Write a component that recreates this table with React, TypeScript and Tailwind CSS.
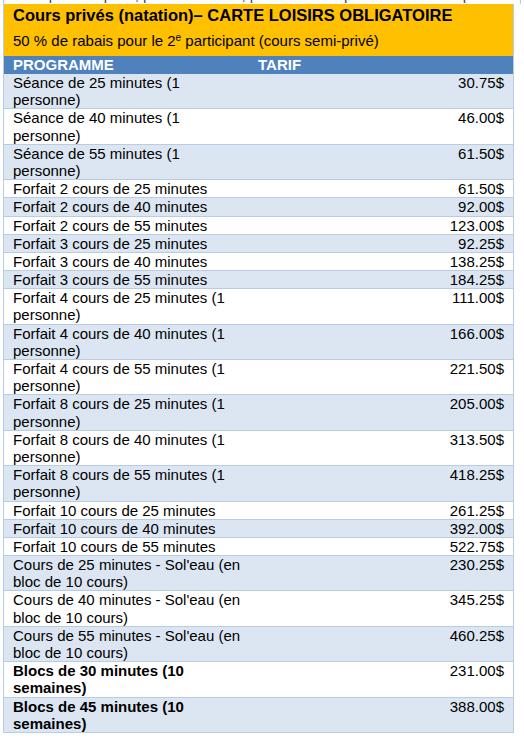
import React from "react";

type Row = { label: string; price: string; bold?: boolean };

const rows: Row[] = [
  { label: "Séance de 25 minutes (1 personne)", price: "30.75$" },
  { label: "Séance de 40 minutes (1 personne)", price: "46.00$" },
  { label: "Séance de 55 minutes (1 personne)", price: "61.50$" },
  { label: "Forfait 2 cours de 25 minutes", price: "61.50$" },
  { label: "Forfait 2 cours de 40 minutes", price: "92.00$" },
  { label: "Forfait 2 cours de 55 minutes", price: "123.00$" },
  { label: "Forfait 3 cours de 25 minutes", price: "92.25$" },
  { label: "Forfait 3 cours de 40 minutes", price: "138.25$" },
  { label: "Forfait 3 cours de 55 minutes", price: "184.25$" },
  { label: "Forfait 4 cours de 25 minutes (1 personne)", price: "111.00$" },
  { label: "Forfait 4 cours de 40 minutes (1 personne)", price: "166.00$" },
  { label: "Forfait 4 cours de 55 minutes (1 personne)", price: "221.50$" },
  { label: "Forfait 8 cours de 25 minutes (1 personne)", price: "205.00$" },
  { label: "Forfait 8 cours de 40 minutes (1 personne)", price: "313.50$" },
  { label: "Forfait 8 cours de 55 minutes (1 personne)", price: "418.25$" },
  { label: "Forfait 10 cours de 25 minutes", price: "261.25$" },
  { label: "Forfait 10 cours de 40 minutes", price: "392.00$" },
  { label: "Forfait 10 cours de 55 minutes", price: "522.75$" },
  { label: "Cours de 25 minutes - Sol'eau (en bloc de 10 cours)", price: "230.25$" },
  { label: "Cours de 40 minutes - Sol'eau (en bloc de 10 cours)", price: "345.25$" },
  { label: "Cours de 55 minutes - Sol'eau (en bloc de 10 cours)", price: "460.25$" },
  { label: "Blocs de 30 minutes (10 semaines)", price: "231.00$", bold: true },
  { label: "Blocs de 45 minutes (10 semaines)", price: "388.00$", bold: true },
];

export default function App() {
  return (
    <div className="min-h-[742px] w-[524px] bg-white font-['Liberation_Sans',Arial,sans-serif] text-black">
      {/* bas de la ligne précédente, coupé par le cadrage */}
      <div className="mx-[3px] h-[4px] overflow-hidden border-x border-[#b8cce4]">
        <div className="-mt-[14px] pl-[9px] text-[15px] leading-[17px] text-[#444]">
          Inscription requise, places limitées, paiement complet lors de l'inscription
        </div>
      </div>

      <div className="mx-[3px] w-[511px] border border-t-0 border-[#b8cce4]">
        <div className="bg-[#ffc000] px-[9px] pt-[2px] pb-[6px]">
          <div className="text-[16.5px] font-bold leading-[18px]">
            Cours privés (natation)– CARTE LOISIRS OBLIGATOIRE
          </div>
          <div className="mt-[8px] text-[15px] leading-[18px]">
            50 % de rabais pour le 2<sup className="text-[10px]">e</sup> participant (cours semi-privé)
          </div>
        </div>

        <div className="flex h-[18px] items-center bg-[#4f81bd] text-[15px] font-bold leading-[18px] text-white">
          <div className="w-[246px] pl-[9px]">PROGRAMME</div>
          <div className="pl-[8px]">TARIF</div>
        </div>

        {rows.map((r, i) => (
          <div
            key={r.label}
            className={`flex border-b border-[#b8cce4] text-[15px] leading-[17.18px] last:border-b-0 ${
              i % 2 === 0 ? "bg-[#dce6f2]" : "bg-white"
            }`}
          >
            <div className={`w-[246px] shrink-0 pl-[9px] pr-[4px] ${r.bold ? "font-bold" : ""}`}>
              {r.label}
            </div>
            <div className="flex-1 pr-[9px] text-right">{r.price}</div>
          </div>
        ))}
      </div>
    </div>
  );
}
